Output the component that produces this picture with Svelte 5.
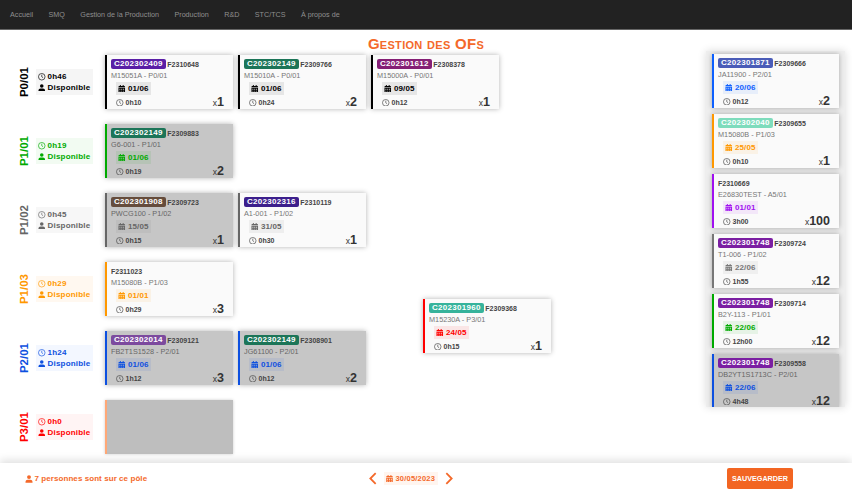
<script>
	const nav = ['Accueil', 'SMQ', 'Gestion de la Production', 'Production', 'R&D', 'STC/TCS', 'À propos de'];

	const rows = [
		{
			name: 'P0/01', time: '0h46', color: '#000000', tint: '#f5f5f5',
			cards: [
				{ badge: 'C202302409', bg: '#5a1fa6', of: 'F2310648', ref: 'M15051A - P0/01', date: '01/06', time: '0h10', qty: 1 },
				{ badge: 'C202302149', bg: '#1c7558', of: 'F2309766', ref: 'M15010A - P0/01', date: '01/06', time: '0h24', qty: 2 },
				{ badge: 'C202301612', bg: '#851f75', of: 'F2308378', ref: 'M15000A - P0/01', date: '09/05', time: '0h12', qty: 1 }
			]
		},
		{
			name: 'P1/01', time: '0h19', color: '#00aa00', tint: '#f2fbf2',
			cards: [
				{ badge: 'C202302149', bg: '#1c7558', of: 'F2309883', ref: 'G6-001 - P1/01', date: '01/06', time: '0h19', qty: 2, off: true }
			]
		},
		{
			name: 'P1/02', time: '0h45', color: '#666666', tint: '#f7f7f7',
			cards: [
				{ badge: 'C202301908', bg: '#654c3c', of: 'F2309723', ref: 'PWCG100 - P1/02', date: '15/05', time: '0h15', qty: 1, off: true },
				{ badge: 'C202302316', bg: '#3c1f8c', of: 'F2310119', ref: 'A1-001 - P1/02', date: '31/05', time: '0h30', qty: 1 }
			]
		},
		{
			name: 'P1/03', time: '0h29', color: '#ff9800', tint: '#fff8f0',
			cards: [{ of: 'F2311023', ref: 'M15080B - P1/03', date: '01/01', time: '0h29', qty: 3 }]
		},
		{
			name: 'P2/01', time: '1h24', color: '#0d50e0', tint: '#f3f7ff',
			cards: [
				{ badge: 'C202302014', bg: '#7c4a9e', of: 'F2309121', ref: 'FB2T1S1528 - P2/01', date: '01/06', time: '1h12', qty: 3, off: true },
				{ badge: 'C202302149', bg: '#1c7558', of: 'F2308901', ref: 'JG61100 - P2/01', date: '01/06', time: '0h12', qty: 2, off: true }
			]
		},
		{ name: 'P3/01', time: '0h0', color: '#ff0000', tint: '#fff4f4', cards: [], empty: true }
	];

	const dragged = { badge: 'C202301960', bg: '#36b39b', of: 'F2309368', ref: 'M15230A - P3/01', date: '24/05', time: '0h15', qty: 1, color: '#ff0000' };

	const queue = [
		{ badge: 'C202301871', bg: '#4a5cb8', of: 'F2309666', ref: 'JA11900 - P2/01', date: '20/06', time: '0h12', qty: 2, color: '#0d60ff' },
		{ badge: 'C202302040', bg: '#7edcbc', of: 'F2309655', ref: 'M15080B - P1/03', date: '25/05', time: '0h10', qty: 1, color: '#ff9800' },
		{ of: 'F2310669', ref: 'E26830TEST - A5/01', date: '01/01', time: '3h00', qty: 100, color: '#a010f0' },
		{ badge: 'C202301748', bg: '#7b1fa2', of: 'F2309724', ref: 'T1-006 - P1/02', date: '22/06', time: '1h55', qty: 12, color: '#777777' },
		{ badge: 'C202301748', bg: '#7b1fa2', of: 'F2309714', ref: 'B2Y-113 - P1/01', date: '22/06', time: '12h00', qty: 12, color: '#00aa00' },
		{ badge: 'C202301748', bg: '#7b1fa2', of: 'F2309558', ref: 'DB2YT1S1713C - P2/01', date: '22/06', time: '4h48', qty: 12, color: '#0d50e0', off: true }
	];
</script>

{#snippet clock()}
	<svg class="ico" viewBox="0 0 16 16" fill="none" stroke="currentColor" stroke-width="1.4">
		<circle cx="8" cy="8" r="7" />
		<path d="M8 3.600V8l2.800 2" />
	</svg>
{/snippet}

{#snippet user()}
	<svg class="ico" viewBox="0 0 16 16" fill="currentColor">
		<circle cx="8" cy="4.200" r="3.900" />
		<path d="M1 15.600v-1.800C1 11 3 9.400 5.400 9.400h5.200c2.400 0 4.400 1.600 4.400 4.400v1.800z" />
	</svg>
{/snippet}

{#snippet calendar()}
	<svg class="ico" viewBox="0 0 14 16" fill="currentColor">
		<path d="M3 0h2v2h4V0h2v2h1.500C13.300 2 14 2.700 14 3.500V5H0V3.500C0 2.700.7 2 1.500 2H3z" />
		<path fill-rule="evenodd" d="M0 6h14v8.500c0 .8-.7 1.500-1.500 1.500h-11C.7 16 0 15.300 0 14.500zM2 8v2h2V8zm4 0v2h2V8zm4 0v2h2V8zM2 12v2h2v-2zm4 0v2h2v-2zm4 0v2h2v-2z" />
	</svg>
{/snippet}

{#snippet card(c, color)}
	<article class="card" class:off={c.off} style="--c:{color}">
		<div class="head">
			{#if c.badge}<span class="badge" style="background:{c.bg}">{c.badge}</span>{/if}
			<span class="of">{c.of}</span>
		</div>
		<div class="ref">{c.ref}</div>
		<div class="date">{@render calendar()}{c.date}</div>
		<div class="foot">
			<span class="time">{@render clock()}{c.time}</span>
			<span class="qty"><small>x</small>{c.qty}</span>
		</div>
	</article>
{/snippet}

<nav class="topbar">
	{#each nav as item}
		<span>{item}</span>
	{/each}
</nav>

<h1>Gestion des OFs</h1>

<main>
	<section class="board">
		{#each rows as row}
			<div class="row" style="--c:{row.color}">
				<div class="name">{row.name}</div>
				<div class="info" style="background:{row.tint}">
					<div class="line">{@render clock()}{row.time}</div>
					<div class="line">{@render user()}Disponible</div>
				</div>
				<div class="cards">
					{#each row.cards as c}
						{@render card(c, row.color)}
					{/each}
					{#if row.empty}
						<div class="placeholder"></div>
					{/if}
				</div>
			</div>
		{/each}
		<div class="dragged">{@render card(dragged, dragged.color)}</div>
	</section>

	<aside>
		<div class="queue">
			{#each queue as c}
				{@render card(c, c.color)}
			{/each}
		</div>
	</aside>
</main>

<footer>
	<div class="people">{@render user()}7 personnes sont sur ce pôle</div>
	<div class="picker">
		<svg class="chev" viewBox="0 0 9 14" fill="none" stroke="currentColor" stroke-width="2"><path d="M7.500 1 1.500 7l6 6" /></svg>
		<span class="day">{@render calendar()}30/05/2023</span>
		<svg class="chev" viewBox="0 0 9 14" fill="none" stroke="currentColor" stroke-width="2"><path d="M1.500 1l6 6-6 6" /></svg>
	</div>
	<button>Sauvegarder</button>
</footer>

<style>
	:global(body) {
		background: #fff;
		font-family: 'Liberation Sans', Arial, sans-serif;
		overflow: hidden;
	}

	.topbar {
		height: 30px;
		box-sizing: border-box;
		display: flex;
		align-items: center;
		gap: 15.4px;
		padding: 0 10px;
		background: #222;
		border-bottom: 1px solid #666;
		color: #8f8f8f;
		font-size: 7.2px;
	}

	h1 {
		margin: 0;
		height: 25px;
		padding-top: 5px;
		box-sizing: border-box;
		text-align: center;
		font-size: 15px;
		line-height: 17px;
		font-weight: 700;
		font-variant: small-caps;
		letter-spacing: 0.3px;
		color: #f4692a;
	}

	main {
		display: flex;
		height: 408px;
	}

	.board {
		position: relative;
		flex: 1;
	}

	.row {
		display: flex;
		align-items: center;
		height: 54px;
		margin-bottom: 15px;
		color: var(--c);
	}

	.name {
		width: 12px;
		margin-left: 18px;
		writing-mode: vertical-rl;
		transform: rotate(180deg);
		text-align: center;
		font-size: 11.5px;
		font-weight: 700;
		line-height: 12px;
	}

	.info {
		width: 57px;
		height: 26px;
		box-sizing: border-box;
		margin: 0 12px 0 6px;
		padding: 2.5px 0 0 2px;
		font-size: 8px;
		font-weight: 700;
	}

	.line {
		display: flex;
		align-items: center;
		gap: 2px;
		height: 10.5px;
		letter-spacing: 0.2px;
	}

	.ico {
		width: 7.5px;
		height: 7.5px;
		flex: none;
	}

	.cards {
		display: flex;
		gap: 5px;
	}

	.card {
		width: 128px;
		height: 54px;
		box-sizing: border-box;
		padding: 4px 0 0 4px;
		background: #fafafa;
		border-left: 2px solid var(--c);
		box-shadow: 0 0 5px rgba(0, 0, 0, 0.3);
		color: #444;
		flex: none;
	}

	.card.off {
		background: #c6c6c6;
	}

	.head {
		display: flex;
		align-items: center;
		gap: 1.5px;
		height: 10px;
	}

	.badge {
		padding: 0 3px;
		border-radius: 2px;
		color: #fff;
		font-size: 8px;
		line-height: 10px;
		font-weight: 700;
		letter-spacing: 0.3px;
	}

	.of {
		font-size: 7px;
		font-weight: 700;
		color: #444;
	}

	.ref {
		margin-top: 2px;
		height: 9px;
		font-size: 7.3px;
		line-height: 9px;
		color: #777;
	}

	.off .ref {
		color: #666;
	}

	.date {
		display: flex;
		align-items: center;
		gap: 2.5px;
		width: max-content;
		height: 13px;
		margin: 2px 0 0 5px;
		padding: 0 2px;
		background: color-mix(in srgb, var(--c) 8%, transparent);
		color: var(--c);
		font-size: 8px;
		font-weight: 700;
		letter-spacing: 0.1px;
	}

	.foot {
		display: flex;
		justify-content: space-between;
		align-items: center;
		height: 13px;
		margin: 1px 9px 0 5px;
	}

	.time {
		display: flex;
		align-items: center;
		gap: 2px;
		font-size: 7px;
		font-weight: 700;
	}

	.qty {
		font-size: 12.5px;
		line-height: 12px;
		font-weight: 700;
		color: #333;
	}

	.qty small {
		font-size: 8.5px;
		font-weight: 400;
	}

	.placeholder {
		width: 128px;
		height: 54px;
		box-sizing: border-box;
		background: #bebebe;
		border-left: 2px solid #ffa877;
		box-shadow: 0 0 3px rgba(0, 0, 0, 0.2);
	}

	.dragged {
		position: absolute;
		left: 423px;
		top: 244px;
	}

	aside {
		width: 146px;
		flex: none;
		margin-top: -4px;
	}

	.queue {
		display: flex;
		flex-direction: column;
		gap: 6px;
		width: 139px;
		height: 356px;
		box-sizing: border-box;
		padding: 3px 0 0 6px;
		overflow: hidden;
		background: #eee;
		box-shadow: 0 0 8px rgba(0, 0, 0, 0.15);
	}

	.queue .card {
		width: 127px;
	}

	footer {
		position: relative;
		display: flex;
		align-items: center;
		height: 31px;
		background: #fff;
		box-shadow: 0 -3px 8px rgba(0, 0, 0, 0.12);
		color: #f4692a;
		font-size: 8px;
		font-weight: 700;
	}

	.people {
		display: flex;
		align-items: center;
		gap: 1.5px;
		width: 369px;
		box-sizing: border-box;
		padding-left: 25px;
		letter-spacing: 0.07px;
		flex: none;
	}

	.people .ico {
		width: 8px;
		height: 8px;
	}

	.picker {
		display: flex;
		align-items: center;
		gap: 6.5px;
		width: 85px;
		flex: none;
	}

	.chev {
		width: 8px;
		height: 13px;
		flex: none;
	}

	.day {
		display: flex;
		align-items: center;
		gap: 3px;
		height: 13px;
		padding: 0 3px 0 2px;
		background: #fff5ef;
		font-size: 7.5px;
		letter-spacing: 0.2px;
	}

	.day .ico {
		width: 7px;
	}

	button {
		width: 66px;
		height: 21px;
		margin-left: 273px;
		padding: 0;
		border: 0;
		border-radius: 2px;
		background: #f26522;
		color: #fff;
		font: inherit;
		font-size: 7.2px;
		text-transform: uppercase;
	}
</style>
